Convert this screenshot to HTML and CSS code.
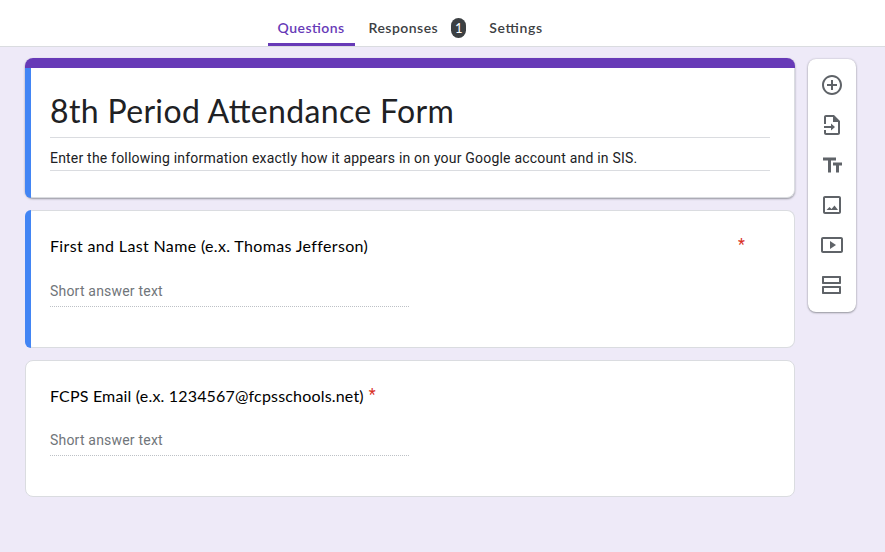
FILE: index.html
```html
<!DOCTYPE html>
<html lang="en">
<head>
<meta charset="utf-8">
<title>8th Period Attendance Form</title>
<link rel="stylesheet" href="styles.css">
</head>
<body>
<nav class="tabs">
  <div class="tab active"><span>Questions</span></div>
  <div class="tab"><span>Responses</span><span class="badge">1</span></div>
  <div class="tab settings"><span>Settings</span></div>
</nav>
<main class="page">
  <div class="cards">
    <section class="card title-card selected">
      <h1>8th Period Attendance Form</h1>
      <p class="description">Enter the following information exactly how it appears in on your Google account and in SIS.</p>
    </section>
    <section class="card question selected">
      <div class="prompt spread"><span>First and Last Name (e.x. Thomas Jefferson)</span><span class="required">*</span></div>
      <div class="answer">Short answer text</div>
    </section>
    <section class="card question last">
      <div class="prompt"><span class="email">FCPS Email (e.x. 1234567@fcpsschools.net)</span><span class="required">*</span></div>
      <div class="answer">Short answer text</div>
    </section>
  </div>
  <aside class="toolbar">
    <svg viewBox="0 0 24 24"><path d="M13 7h-2v4H7v2h4v4h2v-4h4v-2h-4V7zm-1-5C6.49 2 2 6.49 2 12s4.49 10 10 10 10-4.49 10-10S17.51 2 12 2zm0 18c-4.41 0-8-3.59-8-8s3.59-8 8-8 8 3.59 8 8-3.59 8-8 8z"/></svg>
    <svg viewBox="0 0 24 24"><path d="M14 2H6c-1.1 0-2 .9-2 2v7h2V4h7v5h5v11H6v-3H4v3c0 1.1.9 2 2 2h12c1.1 0 2-.9 2-2V8l-6-6zM4 13v2h7v2.5l4-3.5-4-3.5V13H4z"/></svg>
    <svg viewBox="0 0 24 24"><path d="M3 4.5v3h5V19.500h3v-12h5v-3H3zM22 9.500h-9v3h3v7h3v-7h3v-3z"/></svg>
    <svg viewBox="0 0 24 24"><path d="M19 5v14H5V5h14m0-2H5c-1.100 0-2 .9-2 2v14c0 1.100.9 2 2 2h14c1.100 0 2-.9 2-2V5c0-1.100-.9-2-2-2zm-4.500 9.500-3 3.500-2-2L6.500 17h11.500l-3.500-4.500z"/></svg>
    <svg viewBox="0 0 24 24"><path d="M10 8v8l6-4-6-4zm11-4H3c-1.100 0-2 .9-2 2v12c0 1.100.9 2 2 2h18c1.100 0 2-.9 2-2V6c0-1.100-.9-2-2-2zm0 14H3V6h18v12z"/></svg>
    <svg viewBox="0 0 24 24"><path fill-rule="evenodd" d="M3 3h17c.6 0 1 .4 1 1v6c0 .6-.4 1-1 1H3c-.6 0-1-.4-1-1V4c0-.6.400-1 1-1zm1 2v4h15V5H4zM3 13h17c.6 0 1 .4 1 1v6c0 .6-.4 1-1 1H3c-.6 0-1-.4-1-1v-6c0-.6.400-1 1-1zm1 2v4h15v-4H4z"/></svg>
  </aside>
</main>
</body>
</html>
```
FILE: styles.css
```css
* { box-sizing: border-box; }
body {
  margin: 0;
  height: 552px;
  overflow: hidden;
  background: #eeeaf8;
  color: #202124;
  font-family: Roboto, sans-serif;
}
.tabs {
  display: flex;
  height: 47px;
  padding: 10px 0 0 268px;
  gap: 4px;
  background: #fff;
  border-bottom: 1px solid #dadce0;
}
.tab {
  display: flex;
  align-items: center;
  height: 36px;
  padding: 0 9.5px;
  font: 600 14px/20px Lato, sans-serif;
  letter-spacing: .48px;
  font-feature-settings: "liga" 1;
  color: #3c4043;
  white-space: nowrap;
}
.tab.active {
  width: 87px;
  color: #673ab7;
  background: linear-gradient(#673ab7, #673ab7) bottom / 100% 3px no-repeat;
}
.tab.settings { letter-spacing: .65px; }
.badge {
  width: 15px;
  height: 20px;
  margin-left: 13px;
  border-radius: 8px;
  background: #3c4043;
  color: #fff;
  font-weight: 400;
  font-size: 13px;
  letter-spacing: 0;
  text-align: center;
}
.page {
  display: flex;
  align-items: flex-start;
  gap: 13px;
  padding: 11px 0 0 25px;
}
.cards {
  display: flex;
  flex-direction: column;
  gap: 12px;
  width: 770px;
}
.card {
  height: 138px;
  padding: 23px 24px;
  background: #fff;
  border: 1px solid #dadce0;
  border-radius: 8px;
}
.selected {
  position: relative;
  border-left: 0;
  padding-left: 25px;
}
/* selection stripe, laid over the card border */
.selected::before {
  content: "";
  position: absolute;
  inset: -1px auto -1px 0;
  width: 6px;
  border-radius: 8px 0 0 8px;
  background: #4285f4;
}
.title-card {
  height: 140px;
  padding-top: 33px;
  border-top: 0;
  box-shadow: 0 1px 2px rgba(60, 64, 67, .5);
}
.title-card::before { top: 10px; border-top-left-radius: 0; }
/* theme colour bar */
.title-card::after {
  content: "";
  position: absolute;
  inset: 0 -1px auto 0;
  height: 10px;
  border-radius: 8px 8px 0 0;
  background: #673ab7;
}
h1 {
  height: 47px;
  margin: 0;
  border-bottom: 1px solid #dadce0;
  font: 400 32px/40px Lato, sans-serif;
  letter-spacing: .34px;
  font-feature-settings: "liga" 1;
  white-space: nowrap;
}
.description {
  height: 33px;
  margin: 0;
  padding-top: 10px;
  border-bottom: 1px solid #dadce0;
  font-size: 14px;
  line-height: 20px;
  letter-spacing: .2px;
  white-space: nowrap;
}
.prompt {
  display: flex;
  gap: 5px;
  height: 24px;
  color: #000;
  font: 400 16px/24px Lato, sans-serif;
  letter-spacing: .35px;
  white-space: nowrap;
}
.email { letter-spacing: .18px; }
.spread {
  justify-content: space-between;
  padding-right: 25px;
}
.required {
  color: #d93025;
  font: 400 16px/22px Roboto, sans-serif;
  letter-spacing: 0;
}
.answer {
  width: 359px;
  height: 28px;
  margin-top: 21px;
  background: repeating-linear-gradient(90deg, #bdc1c6 0 1px, transparent 1px 2px) bottom / 100% 1px no-repeat;
  color: #70757a;
  font-size: 14px;
  line-height: 24px;
  letter-spacing: .2px;
}
.last { height: 137px; }
.last .answer { margin-top: 20px; }
.toolbar {
  display: flex;
  flex-direction: column;
  align-items: center;
  gap: 16px;
  width: 48px;
  height: 253px;
  margin-top: 1px;
  padding-top: 14px;
  border-radius: 8px;
  background: #fff;
  box-shadow: 0 1px 2px rgba(60, 64, 67, .45), 0 0 2px rgba(60, 64, 67, .25);
}
.toolbar svg {
  width: 24px;
  height: 24px;
  fill: #5f6368;
}
```
